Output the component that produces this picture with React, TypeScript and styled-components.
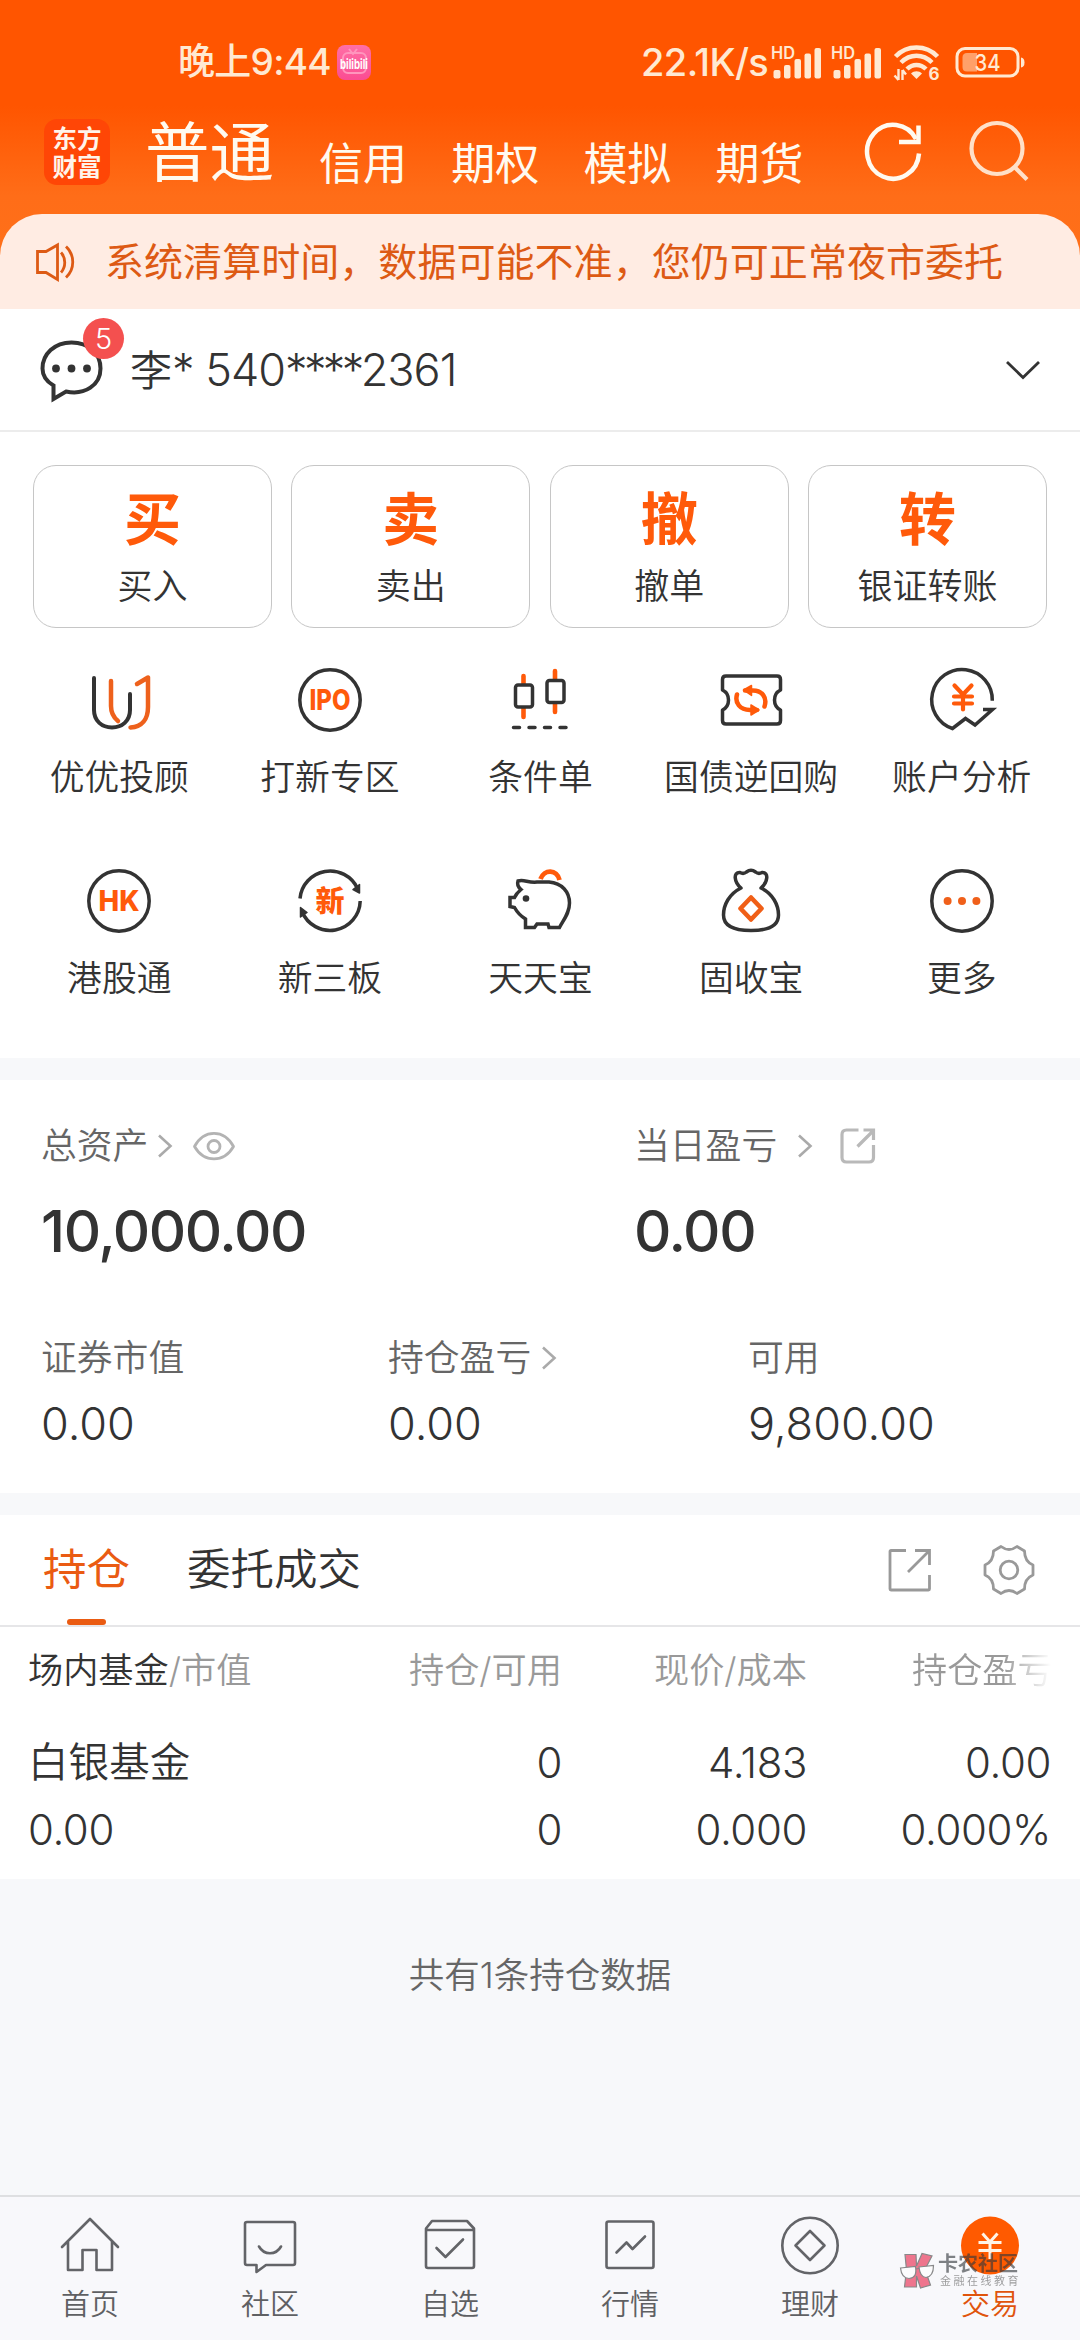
import React from 'react';
import styled, { createGlobalStyle } from 'styled-components';

const ORANGE = '#ff5a0a';
const INK = '#333333';
const FONT = `Inter, 'Noto Sans CJK SC', sans-serif`;

const GlobalStyle = createGlobalStyle`
  html, body { margin: 0; padding: 0; background: #f7f8fa; }
  *, *::before, *::after { box-sizing: border-box; }
  svg { display: block; flex: none; }
`;

const Screen = styled.div`
  position: relative;
  display: flex;
  flex-direction: column;
  width: 1080px;
  height: 2340px;
  overflow: hidden;
  background: #f7f8fa;
  color: ${INK};
  font-family: ${FONT};
  font-weight: 350;
  white-space: nowrap;
`;

/* ---------- header ---------- */

const Header = styled.header`
  height: 262px;
  margin-bottom: -48px;
  background: linear-gradient(180deg, #ff5500 0, #ff5500 106px, #ff6d18 196px, #ff7019 262px);
  color: #fffaf0;
`;

const StatusBar = styled.div`
  display: flex;
  align-items: center;
  height: 104px;
  padding: 20px 0 0 178px;
  color: #ffe9d2;
`;

const Clock = styled.span`
  font-size: 37px;
  font-weight: 500;
  line-height: 44px;
  letter-spacing: -0.7px;
  width: 159px;
`;

const BiliBadge = styled.span`
  display: flex;
  align-items: center;
  justify-content: center;
  width: 34px;
  height: 35px;
  border-radius: 8px;
  background: linear-gradient(180deg, #ff6fa6, #fb4c92);
`;

const Speed = styled.span`
  margin-left: 270px;
  width: 129px;
  font-size: 38px;
  font-weight: 500;
  line-height: 44px;
  letter-spacing: -0.6px;
`;

const StatusIcons = styled.div`
  display: flex;
  align-items: center;
`;

const NavRow = styled.nav`
  display: flex;
  align-items: flex-start;
  height: 100px;
  padding: 15px 0 0 44px;
`;

const Logo = styled.div`
  width: 66px;
  height: 66px;
  padding: 5px 8px 0;
  border-radius: 13px;
  background: #ff4606;
  font-family: 'Noto Sans CJK SC', sans-serif;
  font-size: 24.5px;
  font-weight: 700;
  line-height: 28px;
  color: #fff4ea;
  text-align: center;
  white-space: pre-line;
`;

const MainTab = styled.span`
  width: 174px;
  margin: -1px 0 0 35px;
  font-size: 64.5px;
  font-weight: 400;
  line-height: 70px;
`;

const SubTab = styled.span`
  width: 132.2px;
  margin-top: 20px;
  font-size: 44px;
  font-weight: 400;
  line-height: 50px;
`;

const NavIcon = styled.span<{ $left: number }>`
  margin-left: ${(p) => p.$left}px;
`;

/* ---------- notice / account ---------- */

const Notice = styled.div`
  display: flex;
  align-items: center;
  height: 95px;
  padding: 0 0 0 35px;
  border-radius: 42px 42px 0 0;
  background: #ffece3;
  color: #dd5a14;
  font-size: 39px;
  line-height: 46px;
  font-weight: 400;
`;

const NoticeText = styled.span`
  margin-left: 28px;
  letter-spacing: 0.05px;
`;

const Account = styled.div`
  display: flex;
  align-items: center;
  height: 123px;
  padding: 0 38px 0 40px;
  background: #fff;
  border-bottom: 2px solid #ececec;
`;

const BubbleWrap = styled.span`
  position: relative;
  width: 90px;
`;

const Badge = styled.span`
  position: absolute;
  left: 43px;
  top: -19px;
  width: 41px;
  height: 41px;
  border-radius: 50%;
  background: #f4504f;
  color: #fff;
  font-size: 29px;
  line-height: 41px;
  text-align: center;
`;

const AccountName = styled.span`
  flex: 1;
  padding-top: 2px;
  font-size: 42px;
  line-height: 50px;
`;

const AccountNo = styled.span<{ $tight?: boolean }>`
  font-size: 45px;
  letter-spacing: ${(p) => (p.$tight ? -3.6 : -1)}px;
`;

/* ---------- trade actions ---------- */

const Actions = styled.section`
  height: 626px;
  padding-top: 33px;
  background: #fff;
`;

const Cards = styled.div`
  display: grid;
  grid-template-columns: repeat(4, 1fr);
  gap: 19.5px;
  padding: 0 33px;
`;

const Card = styled.div`
  display: flex;
  flex-direction: column;
  align-items: center;
  height: 163px;
  padding-top: 21px;
  border: 1.4px solid #c6c6c6;
  border-radius: 23px;
`;

const CardGlyph = styled.span`
  font-size: 57px;
  font-weight: 700;
  line-height: 66px;
  color: ${ORANGE};
`;

const CardLabel = styled.span`
  margin-top: 12px;
  font-size: 35px;
  line-height: 42px;
`;

const Shortcuts = styled.div`
  display: grid;
  grid-template-columns: repeat(5, 1fr);
  padding: 36px 13px 0 14px;
  row-gap: 66px;
`;

const Shortcut = styled.div`
  display: flex;
  flex-direction: column;
  align-items: center;
  height: 135px;
  font-size: 34.8px;
  line-height: 42px;
  gap: 20px;
`;

/* ---------- assets ---------- */

const Assets = styled.section`
  height: 413px;
  margin-top: 22px;
  padding: 45px 0 0 41px;
  background: #fff;
`;

const AssetRow = styled.div<{ $cols: string; $gap?: number }>`
  display: grid;
  grid-template-columns: ${(p) => p.$cols};
  margin-top: ${(p) => p.$gap ?? 0}px;
`;

const AssetLabel = styled.span`
  display: flex;
  align-items: center;
  font-size: 35.8px;
  line-height: 42px;
  color: #666;
`;

const LabelIcon = styled.span<{ $left: number }>`
  margin-left: ${(p) => p.$left}px;
`;

const BigValue = styled.span`
  display: block;
  margin-top: 29px;
  font-size: 58px;
  font-weight: 500;
  line-height: 70px;
  letter-spacing: -1.4px;
`;

const Value = styled.span`
  display: block;
  margin-top: 20px;
  font-size: 45px;
  line-height: 50px;
`;

/* ---------- holdings ---------- */

const Holdings = styled.section`
  height: 364px;
  margin-top: 22px;
  background: #fff;
`;

const TabBar = styled.div`
  display: flex;
  align-items: center;
  height: 112px;
  padding: 0 45px 2px 43px;
  border-bottom: 2px solid #e6e6e8;
  font-size: 43.5px;
  line-height: 52px;
`;

const Tab = styled.span<{ $active?: boolean }>`
  position: relative;
  margin-right: 57px;
  color: ${(p) => (p.$active ? '#ea5b12' : INK)};
  font-weight: ${(p) => (p.$active ? 400 : 350)};
  ${(p) =>
    p.$active &&
    `&::after {
      content: '';
      position: absolute;
      left: 24px;
      bottom: -30px;
      width: 39px;
      height: 6px;
      border-radius: 3px;
      background: #ea5b12;
    }`}
`;

const TabTools = styled.div`
  display: flex;
  align-items: center;
  gap: 50px;
  margin-left: auto;
  padding-top: 2px;
`;

const Table = styled.div`
  display: grid;
  grid-template-columns: 301px 233px 245px 244px;
  padding: 0 28px;
`;

const Th = styled.span<{ $align?: string; $fade?: boolean }>`
  height: 86px;
  line-height: 86px;
  font-size: 35.2px;
  color: #999;
  text-align: ${(p) => p.$align ?? 'right'};
  overflow: ${(p) => (p.$fade ? 'hidden' : 'visible')};
  padding-left: ${(p) => (p.$fade ? '105px' : '0')};
  ${(p) => p.$fade && 'mask-image: linear-gradient(90deg, #000 196px, transparent 244px);'}
`;

const ThDark = styled.span`
  color: ${INK};
`;

const Td = styled.span<{ $h: number; $align?: string; $cjk?: boolean }>`
  height: ${(p) => p.$h}px;
  line-height: ${(p) => p.$h}px;
  font-size: ${(p) => (p.$cjk ? 40.6 : 42)}px;
  text-align: ${(p) => p.$align ?? 'right'};
  letter-spacing: ${(p) => (p.$cjk ? 0 : -0.4)}px;
`;

const Spacer = styled.span`
  grid-column: 1 / -1;
  height: 17px;
`;

const Summary = styled.p`
  flex: 1;
  margin: 0;
  padding-top: 76px;
  text-align: center;
  font-size: 35.5px;
  line-height: 42px;
  color: #666;
`;

/* ---------- bottom bar ---------- */

const BottomBar = styled.footer`
  display: grid;
  grid-template-columns: repeat(6, 1fr);
  height: 145px;
  border-top: 2px solid #dedfe1;
  background: #f8f8fb;
`;

const BottomItem = styled.div<{ $active?: boolean }>`
  display: flex;
  flex-direction: column;
  align-items: center;
  padding-top: 17px;
  gap: 10px;
  font-size: 29px;
  line-height: 34px;
  color: ${(p) => (p.$active ? '#e0540c' : '#5f6063')};
`;

const Watermark = styled.div`
  position: absolute;
  left: 899px;
  top: 2250px;
  display: flex;
  align-items: center;
  opacity: 0.62;
`;

const WatermarkText = styled.div`
  display: flex;
  flex-direction: column;
  margin-left: 3px;
`;

const WatermarkTitle = styled.span`
  font-size: 20px;
  font-weight: 700;
  line-height: 22px;
  color: #33373c;
`;

const WatermarkSub = styled.span`
  padding-left: 2px;
  font-size: 11px;
  font-weight: 400;
  line-height: 13px;
  letter-spacing: 2.5px;
  color: #666;
`;

/* ---------- icons ---------- */

const Signal = () => (
  <svg width="60" height="40" viewBox="0 0 60 40" fill="currentColor">
    <text x="1" y="17" fontFamily="Inter" fontSize="17" fontWeight="600" textLength="24" lengthAdjust="spacingAndGlyphs">HD</text>
    <rect x="3.500" y="28" width="7" height="8.500" rx="2" />
    <rect x="14" y="23" width="6.500" height="13.500" rx="2" />
    <rect x="24.500" y="17" width="6.500" height="19.500" rx="2" />
    <rect x="34.500" y="11.500" width="6.500" height="25" rx="2" />
    <rect x="44.500" y="6" width="6.500" height="30.500" rx="2" />
  </svg>
);

const Wifi = () => (
  <svg width="50" height="40" viewBox="0 0 50 40" fill="none" stroke="currentColor">
    <path d="M3.500 14.500C15 2.500 34 2.500 45.500 14.500" strokeWidth="4.500" />
    <path d="M9 20.500C18 11.500 31 11.500 40 20.500" strokeWidth="4.500" />
    <path d="M15 27C20.500 21.500 28.500 21.500 34 27" strokeWidth="4.500" />
    <path d="M24.500 37L19 31.500C22 28.500 27 28.500 30 31.500Z" fill="currentColor" stroke="none" />
    <path d="M6.500 27V38M2.500 33.500L6.500 38M10.500 38V28M14 32.500L10.500 28" strokeWidth="2.400" />
    <text x="36.500" y="38" fontFamily="Inter" fontSize="17" fontWeight="700" fill="currentColor" stroke="none">6</text>
  </svg>
);

const Battery = () => (
  <svg width="74" height="40" viewBox="0 0 74 40" fill="none">
    <rect x="4" y="6.500" width="61" height="27.500" rx="8" stroke="currentColor" strokeWidth="3" />
    <path d="M14 11H24V29.500H14Q9.500 29.500 9.500 25V15.500Q9.500 11 14 11Z" fill="#ffa069" />
    <path d="M68 15.500Q71.500 16 71.500 20.500T68 25.500Z" fill="currentColor" />
    <text x="34.500" y="28.500" textAnchor="middle" fontFamily="Inter" fontSize="23" fontWeight="500" fill="currentColor" textLength="26" lengthAdjust="spacingAndGlyphs">34</text>
  </svg>
);

const Refresh = () => (
  <svg width="64" height="64" viewBox="0 0 64 64" fill="none" stroke="currentColor" strokeWidth="4.500">
    <path d="M56 34.500A26 27 0 1 1 53 20" />
    <path d="M55.500 6.500V23H36" />
  </svg>
);

const Search = () => (
  <svg width="64" height="64" viewBox="0 0 64 64" fill="none" stroke="#ffe0c8" strokeWidth="4.200">
    <circle cx="30" cy="29.500" r="25.500" />
    <path d="M48 48.500L60 60.500" />
  </svg>
);

const Speaker = () => (
  <svg width="42" height="42" viewBox="0 0 42 42" fill="none" stroke="currentColor" strokeWidth="2.800">
    <path d="M2.500 10.500H11L22.500 4V38.500L11 31.500H2.500Z" />
    <path d="M26 11.500C31 17 31 26 26 31.500M31 5.500C40 14 40 28 31 36.500" />
  </svg>
);

const Bubble = () => (
  <svg width="66" height="66" viewBox="0 0 66 66" fill="none">
    <path d="M13.500 48.500V62L26 54.500C45 58.500 60.500 48 60.500 31.500C60.500 16 48.500 5.500 31.500 5.500S2.500 17 2.500 31.500C2.500 38.500 6.500 44.500 13.500 48.500Z" stroke={INK} strokeWidth="4" />
    <circle cx="16" cy="31.500" r="3.900" fill={INK} />
    <circle cx="31.500" cy="31.500" r="3.900" fill={INK} />
    <circle cx="47" cy="31.500" r="3.900" fill={INK} />
  </svg>
);

const ChevronDown = () => (
  <svg width="38" height="22" viewBox="0 0 38 22" fill="none" stroke={INK} strokeWidth="2.800">
    <path d="M3 3L19 18.500L35 3" />
  </svg>
);

const ChevronRight = () => (
  <svg width="16" height="26" viewBox="0 0 16 26" fill="none" stroke="#aaa" strokeWidth="2.600">
    <path d="M2 2.500L13.500 13L2 23.500" />
  </svg>
);

const Eye = () => (
  <svg width="44" height="32" viewBox="0 0 44 32" fill="none" stroke="#b3b3b3" strokeWidth="2.800">
    <path d="M2.500 16.500C12 -1 32 -1 41.500 16.500C32 33 12 33 2.500 16.500Z" strokeLinejoin="round" />
    <circle cx="22" cy="16.500" r="6" />
  </svg>
);

const ShareRound = () => (
  <svg width="38" height="38" viewBox="0 0 38 38" fill="none" stroke="#b9b9b9" strokeWidth="3.200">
    <path d="M19.500 3H7.500Q3 3 3 7.500V30.500Q3 35 7.500 35H30Q34.500 35 34.500 30.500V18M18.500 19.500L34 4M24.500 3H34.500V13" />
  </svg>
);

const ShareSquare = () => (
  <svg width="46" height="46" viewBox="0 0 46 46" fill="none" stroke="#999" strokeWidth="2.800">
    <path d="M19 3.500H4Q3 3.500 3 4.500V42Q3 43 4 43H41.500Q42.500 43 42.500 42V28M21 25L42 4M28 3.500H42.500V18" />
  </svg>
);

const Gear = () => (
  <svg width="52" height="52" viewBox="0 0 52 52" fill="none" stroke="#999" strokeWidth="2.800" strokeLinejoin="round">
    <path d="M18 2.500Q26 8.500 34 2.500L41.500 7Q41.500 17.500 50 21V31Q41.500 34.500 41.500 45L34 49.500Q26 43.500 18 49.500L10.500 45Q10.500 34.500 2 31V21Q10.500 17.500 10.500 7Z" />
    <circle cx="26" cy="26" r="8.800" />
  </svg>
);

const IconBox = ({ children }: { children: React.ReactNode }) => (
  <svg width="72" height="72" viewBox="0 0 72 72" fill="none" stroke={INK} strokeWidth="3.500" strokeLinejoin="round" strokeLinecap="round">
    {children}
  </svg>
);

const glyphText = { fontFamily: 'Inter', fontWeight: 800, fill: ORANGE, stroke: 'none' } as const;

const UuIcon = () => (
  <IconBox>
    <path d="M11 14V46C11 57 19 63.500 29 63.500S47 57 47 46V30" strokeWidth="4" />
    <path d="M28 17V42C28 49 30 53 35 57M54 20L65 13.500V43C65 55 59 63 47.500 63.500" stroke="#ee611c" strokeWidth="4.500" />
  </IconBox>
);

const IpoIcon = () => (
  <IconBox>
    <circle cx="36" cy="36" r="30.200" />
    <text x="15.500" y="46" fontSize="28" textLength="41" lengthAdjust="spacingAndGlyphs" {...glyphText}>IPO</text>
  </IconBox>
);

const CandleIcon = () => (
  <IconBox>
    <path d="M19.500 12V53M51 7V48" stroke={ORANGE} strokeWidth="4.600" />
    <rect x="11.500" y="21" width="17" height="22" rx="2.500" fill="#fff" />
    <rect x="43" y="16.500" width="17" height="22" rx="2.500" fill="#fff" />
    <path d="M9.500 63.500H15.500M25 63.500H31M40.500 63.500H46.500M56 63.500H62" />
  </IconBox>
);

const TicketIcon = () => (
  <IconBox>
    <path d="M11 12H62Q65.500 12 65.500 15.500V26C57.500 30 57.500 42 65.500 46V56.500Q65.500 60 62 60H11Q7.500 60 7.500 56.500V46C15.500 42 15.500 30 7.500 26V15.500Q7.500 12 11 12Z" />
    <path d="M30 26.500H38C47 26.500 52.500 33.500 49.500 42.500M42 46H35C25 46 19.500 39 22 30.500" stroke={ORANGE} strokeWidth="4.500" />
    <path d="M28.500 26L36.500 21.500V31.500ZM44 46L36 41V51Z" fill={ORANGE} stroke={ORANGE} strokeWidth="1.500" />
  </IconBox>
);

const AnalysisIcon = () => (
  <IconBox>
    <path d="M66.300 36.700A30.300 30.300 0 1 0 26.500 64.500L39.500 54.500L49 61L66.500 45.500H57" strokeLinecap="butt" strokeLinejoin="miter" />
    <path d="M28.500 21.500L37 30.500L45.500 21.500M37 30.500V45.500M28 32.500H46M28 39.500H46" stroke={ORANGE} strokeWidth="4.200" />
  </IconBox>
);

const HkIcon = () => (
  <IconBox>
    <circle cx="36" cy="36" r="30.200" />
    <text x="15.500" y="46" fontSize="28" textLength="41" lengthAdjust="spacingAndGlyphs" {...glyphText}>HK</text>
  </IconBox>
);

const NewBoardIcon = () => (
  <IconBox>
    <path d="M6 33.500A30.200 30.200 0 0 1 63.500 23.500M66.200 36A30.200 30.200 0 0 1 8 46.500" strokeLinecap="butt" />
    <path d="M65.500 19.500V28L59 24.500ZM6.500 52V42.500L13 47.500Z" fill={INK} strokeWidth="1.500" />
    <text x="36" y="46.500" fontSize="29" textAnchor="middle" fill={ORANGE} stroke="none" fontFamily="'Noto Sans CJK SC', sans-serif" fontWeight="900">新</text>
  </IconBox>
);

const PigIcon = () => (
  <IconBox>
    <path d="M36.500 14C40 4 53 4 55.500 15" stroke={ORANGE} strokeWidth="4.800" strokeLinecap="butt" />
    <path d="M14 16C20 14 24 18 33 17H45C58 18 65.500 27 65.500 38C65.500 48 60 54 55.500 62.500H45L44 59H33L30.500 62.500H21.500V54C15 50 13 47 10.500 42.500L6 41.500V32.500H10.500C12 29 14 27 17 24.500C14 22 13 19 14 16Z" strokeLinejoin="miter" fill="#fff" />
    <circle cx="22" cy="33.500" r="3.300" fill={INK} stroke="none" />
  </IconBox>
);

const BagIcon = () => (
  <IconBox>
    <path d="M26 23C19 17 18 7 25 7.500Q28.500 9.500 31.500 7Q36 3.500 40.500 7Q43.500 9.500 47 7.500C54 7 53 17 46 23C58 29 63.500 40 63.500 50C63.500 61 54 65.500 36 65.500S8.500 61 8.500 50C8.500 40 14 29 26 23Z" />
    <path d="M36 32.500L46.500 43.500L36 54.500L25.500 43.500Z" stroke="#f05f17" strokeWidth="4.600" />
  </IconBox>
);

const MoreIcon = () => (
  <IconBox>
    <circle cx="36" cy="36" r="30.200" />
    {[21.6, 36, 50.4].map((x) => (
      <circle key={x} cx={x} cy="36" r="4" fill="#f0601a" stroke="none" />
    ))}
  </IconBox>
);

const BarBox = ({ children }: { children: React.ReactNode }) => (
  <svg width="64" height="64" viewBox="0 0 64 64" fill="none" stroke="#636468" strokeWidth="2.600" strokeLinejoin="round" strokeLinecap="round">
    {children}
  </svg>
);

const HomeIcon = () => (
  <BarBox>
    <path d="M4 33L32 5L60 33M10 28V56H24.500V36H38.500V56H54V28" />
  </BarBox>
);
const CommunityIcon = () => (
  <BarBox>
    <path d="M9 8H55Q57 8 57 10V49Q57 51 55 51H28L18.500 58V51H9Q7 51 7 49V10Q7 8 9 8ZM21 32.500C26 41.500 38 41.500 43 32.500" />
  </BarBox>
);
const PickIcon = () => (
  <BarBox>
    <path d="M8 14.500L14 7H49L56 14.500V52Q56 54 54 54H10Q8 54 8 52ZM8 16H56M18.500 34L27.500 43L45 25.500" />
  </BarBox>
);
const MarketIcon = () => (
  <BarBox>
    <rect x="8.500" y="7.500" width="47" height="46.500" rx="2" />
    <path d="M18.500 38.500L28.500 28.500L34.500 35L47 22.500" />
  </BarBox>
);
const WealthIcon = () => (
  <BarBox>
    <circle cx="32" cy="31.500" r="27.700" />
    <path d="M32 17L46.500 31.500L32 46L17.500 31.500Z" />
  </BarBox>
);
const TradeIcon = () => (
  <BarBox>
    <circle cx="32" cy="31.500" r="29" fill="#ff5a00" stroke="none" />
    <path d="M24.500 19.500L32 28L39.500 19.500M32 28V45M20.500 28.500H43.500M20.500 36.500H43.500" stroke="#fff3e6" strokeWidth="3" strokeLinecap="butt" />
  </BarBox>
);

const WatermarkLogo = () => (
  <svg width="36" height="40" viewBox="0 0 36 40">
    <path d="M6 4.500H17L17.500 16L23 3.500L33 6L26 19.500L31.500 35L21.500 38L17.500 26V37H5.500L7.500 20Z" fill="#e8264a" stroke="#444" strokeWidth="1.200" />
    <path d="M1.500 18L16.500 16.500Q18.500 28 10 28.500Q2.500 28 1.500 18ZM20 17L34.500 15.500Q34.500 26.500 27 27.500Q21 27 20 17Z" fill="#fff" stroke="#444" strokeWidth="1.200" />
    <path d="M16.500 19L20 18.500" stroke="#444" strokeWidth="1.200" />
  </svg>
);

const BiliMark = () => (
  <svg width="34" height="35" viewBox="0 0 34 35" fill="none">
    <rect x="6" y="8" width="23" height="20" rx="5" stroke="#ff95bd" strokeWidth="2" />
    <path d="M12 4L16 9L20 4" stroke="#ff95bd" strokeWidth="2" />
    <text x="3" y="23.500" fontFamily="Inter" fontSize="13.500" fontWeight="700" fill="#fff" textLength="28" lengthAdjust="spacingAndGlyphs">bilibili</text>
  </svg>
);

/* ---------- data ---------- */

const subTabs = ['信用', '期权', '模拟', '期货'];
const cards = [
  ['买', '买入'],
  ['卖', '卖出'],
  ['撤', '撤单'],
  ['转', '银证转账'],
];
const shortcuts: [React.FC, string][] = [
  [UuIcon, '优优投顾'],
  [IpoIcon, '打新专区'],
  [CandleIcon, '条件单'],
  [TicketIcon, '国债逆回购'],
  [AnalysisIcon, '账户分析'],
  [HkIcon, '港股通'],
  [NewBoardIcon, '新三板'],
  [PigIcon, '天天宝'],
  [BagIcon, '固收宝'],
  [MoreIcon, '更多'],
];
const bottomItems: [React.FC, string][] = [
  [HomeIcon, '首页'],
  [CommunityIcon, '社区'],
  [PickIcon, '自选'],
  [MarketIcon, '行情'],
  [WealthIcon, '理财'],
  [TradeIcon, '交易'],
];

export default function App() {
  return (
    <Screen>
      <GlobalStyle />
      <Header>
        <StatusBar>
          <Clock>晚上9:44</Clock>
          <BiliBadge><BiliMark /></BiliBadge>
          <Speed>22.1K/s</Speed>
          <StatusIcons>
            <Signal />
            <Signal />
            <LabelIcon $left={2}><Wifi /></LabelIcon>
            <LabelIcon $left={11}><Battery /></LabelIcon>
          </StatusIcons>
        </StatusBar>
        <NavRow>
          <Logo>{'东方\n财富'}</Logo>
          <MainTab>普通</MainTab>
          {subTabs.map((t) => (
            <SubTab key={t}>{t}</SubTab>
          ))}
          <NavIcon $left={15}><Refresh /></NavIcon>
          <NavIcon $left={40}><Search /></NavIcon>
        </NavRow>
      </Header>

      <Notice>
        <Speaker />
        <NoticeText>系统清算时间，数据可能不准，您仍可正常夜市委托</NoticeText>
      </Notice>

      <Account>
        <BubbleWrap>
          <Bubble />
          <Badge>5</Badge>
        </BubbleWrap>
        <AccountName>
          李<AccountNo>* 540</AccountNo>
          <AccountNo $tight>****</AccountNo>
          <AccountNo>2361</AccountNo>
        </AccountName>
        <ChevronDown />
      </Account>

      <Actions>
        <Cards>
          {cards.map(([glyph, label]) => (
            <Card key={label}>
              <CardGlyph>{glyph}</CardGlyph>
              <CardLabel>{label}</CardLabel>
            </Card>
          ))}
        </Cards>
        <Shortcuts>
          {shortcuts.map(([Icon, label]) => (
            <Shortcut key={label}>
              <Icon />
              <span>{label}</span>
            </Shortcut>
          ))}
        </Shortcuts>
      </Actions>

      <Assets>
        <AssetRow $cols="593px 1fr">
          <div>
            <AssetLabel>
              总资产
              <LabelIcon $left={9}><ChevronRight /></LabelIcon>
              <LabelIcon $left={19}><Eye /></LabelIcon>
            </AssetLabel>
            <BigValue>10,000.00</BigValue>
          </div>
          <div>
            <AssetLabel>
              当日盈亏
              <LabelIcon $left={20}><ChevronRight /></LabelIcon>
              <LabelIcon $left={26}><ShareRound /></LabelIcon>
            </AssetLabel>
            <BigValue>0.00</BigValue>
          </div>
        </AssetRow>
        <AssetRow $cols="347px 360px 1fr" $gap={71}>
          <div>
            <AssetLabel>证券市值</AssetLabel>
            <Value>0.00</Value>
          </div>
          <div>
            <AssetLabel>
              持仓盈亏
              <LabelIcon $left={10}><ChevronRight /></LabelIcon>
            </AssetLabel>
            <Value>0.00</Value>
          </div>
          <div>
            <AssetLabel>可用</AssetLabel>
            <Value>9,800.00</Value>
          </div>
        </AssetRow>
      </Assets>

      <Holdings>
        <TabBar>
          <Tab $active>持仓</Tab>
          <Tab>委托成交</Tab>
          <TabTools>
            <ShareSquare />
            <Gear />
          </TabTools>
        </TabBar>
        <Table>
          <Th $align="left"><ThDark>场内基金</ThDark>/市值</Th>
          <Th>持仓/可用</Th>
          <Th>现价/成本</Th>
          <Th $align="left" $fade>持仓盈亏</Th>
          <Spacer />
          <Td $h={66} $align="left" $cjk>白银基金</Td>
          <Td $h={66}>0</Td>
          <Td $h={66}>4.183</Td>
          <Td $h={66}>0.00</Td>
          <Td $h={67} $align="left">0.00</Td>
          <Td $h={67}>0</Td>
          <Td $h={67}>0.000</Td>
          <Td $h={67}>0.000%</Td>
        </Table>
      </Holdings>

      <Summary>共有1条持仓数据</Summary>

      <BottomBar>
        {bottomItems.map(([Icon, label]) => (
          <BottomItem key={label} $active={label === '交易'}>
            <Icon />
            <span>{label}</span>
          </BottomItem>
        ))}
      </BottomBar>

      <Watermark>
        <WatermarkLogo />
        <WatermarkText>
          <WatermarkTitle>卡农社区</WatermarkTitle>
          <WatermarkSub>金融在线教育</WatermarkSub>
        </WatermarkText>
      </Watermark>
    </Screen>
  );
}
